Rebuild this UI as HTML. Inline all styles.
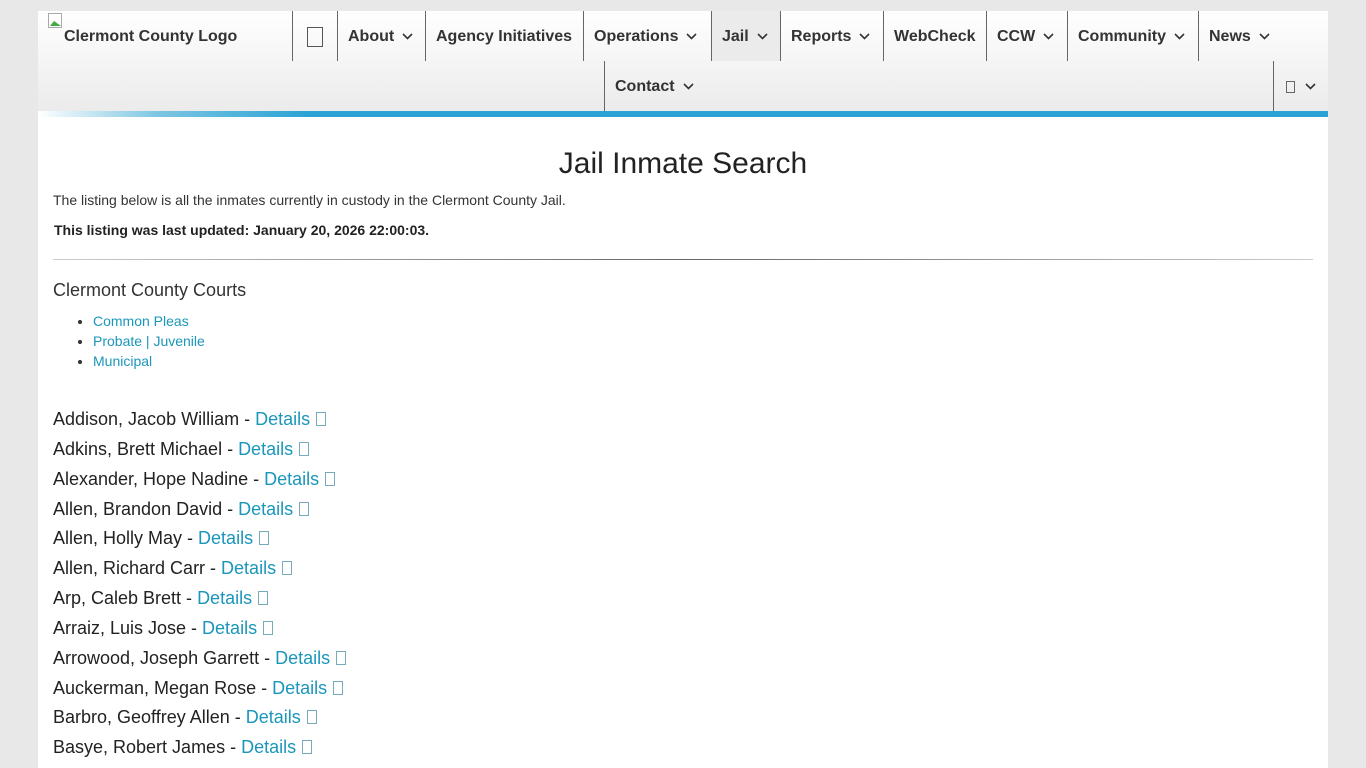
<!DOCTYPE html>
<html style="height:768px;overflow:hidden"><head><meta charset="utf-8"><style>
*{box-sizing:border-box;margin:0;padding:0}
body{background:#e8e8e8;font-family:"Liberation Sans",Arial,sans-serif;color:#333;width:1366px;height:768px;overflow:hidden;position:relative}
#wrap{position:absolute;left:38px;top:11px;width:1290px;height:757px;background:#fff;overflow:hidden}
#nav{position:absolute;left:0;top:0;width:1290px;height:100px;background:linear-gradient(#fff,#ebebeb);box-shadow:0 1px 3px rgba(0,0,0,.4)}
#bar{position:absolute;left:0;top:100px;width:1290px;height:6px;background:linear-gradient(90deg,#fff 0,#7cc6e2 120px,#29a3d5 270px,#29a3d5 100%)}
.it{position:absolute;height:50px;line-height:52px;font-weight:bold;font-size:16px;color:#333;padding-left:10px;border-left:1px solid #666;white-space:nowrap}
.it svg{margin-left:8px;vertical-align:middle}
.logo{position:absolute;left:10px;top:0;font-weight:bold;font-size:16px;color:#333}
.box{display:inline-block;width:16px;height:20px;border:1px solid #555;vertical-align:middle}
.sbox{display:inline-block;width:9px;height:12px;border:1px solid #666;vertical-align:middle}
.content{position:absolute;left:15px;top:0;width:1260px}
h1{position:absolute;top:136px;width:1260px;text-align:center;font-weight:normal;font-size:30px;color:#222}
a{color:#1b96bb;text-decoration:none}
.names div{height:29.85px;font-size:18px;line-height:29.85px;color:#222}
.lbox{display:inline-block;width:10px;height:14px;border:1px solid #7ab;vertical-align:-1px;margin-left:6px}
</style></head><body>
<div id="wrap">
<div id="nav">
 <div class="logo"><svg width="16" height="16" style="position:absolute;left:0;top:2px"><rect x="0.5" y="0.5" width="13" height="14" fill="#fff" stroke="#aaa"/><path d="M2 13 L6 8 L13 13Z" fill="#4a4"/></svg><span style="position:absolute;left:16px;top:17px;white-space:nowrap">Clermont County Logo</span></div>
 <div class="it" style="left:254px;top:0;width:45px;padding-left:14px"><span class="box"></span></div>
 <div class="it" style="left:299px;top:0">About<svg width="11" height="7"><path d="M1 1l4.5 4.5L10 1" stroke="#333" stroke-width="1.6" fill="none"/></svg></div>
 <div class="it" style="left:387px;top:0">Agency Initiatives</div>
 <div class="it" style="left:545px;top:0">Operations<svg width="11" height="7"><path d="M1 1l4.5 4.5L10 1" stroke="#333" stroke-width="1.6" fill="none"/></svg></div>
 <div class="it" style="left:673px;top:0;width:69px;background:#ebebeb">Jail<svg width="11" height="7"><path d="M1 1l4.5 4.5L10 1" stroke="#333" stroke-width="1.6" fill="none"/></svg></div>
 <div class="it" style="left:742px;top:0">Reports<svg width="11" height="7"><path d="M1 1l4.5 4.5L10 1" stroke="#333" stroke-width="1.6" fill="none"/></svg></div>
 <div class="it" style="left:845px;top:0">WebCheck</div>
 <div class="it" style="left:948px;top:0">CCW<svg width="11" height="7"><path d="M1 1l4.5 4.5L10 1" stroke="#333" stroke-width="1.6" fill="none"/></svg></div>
 <div class="it" style="left:1029px;top:0">Community<svg width="11" height="7"><path d="M1 1l4.5 4.5L10 1" stroke="#333" stroke-width="1.6" fill="none"/></svg></div>
 <div class="it" style="left:1160px;top:0">News<svg width="11" height="7"><path d="M1 1l4.5 4.5L10 1" stroke="#333" stroke-width="1.6" fill="none"/></svg></div>
 <div class="it" style="left:566px;top:50px">Contact<svg width="11" height="7"><path d="M1 1l4.5 4.5L10 1" stroke="#333" stroke-width="1.6" fill="none"/></svg></div>
 <div class="it" style="left:1235px;top:50px;padding-left:12px"><span class="sbox"></span><svg width="11" height="7" style="margin-left:10px"><path d="M1 1l4.5 4.5L10 1" stroke="#333" stroke-width="1.6" fill="none"/></svg></div>
</div>
<div id="bar"></div>
<div class="content">
<h1>Jail Inmate Search</h1>
<p style="position:absolute;top:181px;font-size:14px;color:#333">The listing below is all the inmates currently in custody in the Clermont County Jail.</p>
<p style="position:absolute;top:211px;left:1px;font-size:14px;font-weight:bold;color:#222">This listing was last updated: January 20, 2026 22:00:03.</p>
<div style="position:absolute;top:248px;width:1260px;height:1px;background:linear-gradient(90deg,#ccc,#666 50%,#ccc)"></div>
<div style="position:absolute;top:269px;font-size:18px;color:#333">Clermont County Courts</div>
<ul style="position:absolute;top:300px;left:25px;font-size:14px;line-height:20px;padding-left:15px">
<li><a>Common Pleas</a></li><li><a>Probate | Juvenile</a></li><li><a>Municipal</a></li></ul>
<div class="names" style="position:absolute;top:394px">
<div>Addison, Jacob William - <a>Details<span class="lbox"></span></a></div>
<div>Adkins, Brett Michael - <a>Details<span class="lbox"></span></a></div>
<div>Alexander, Hope Nadine - <a>Details<span class="lbox"></span></a></div>
<div>Allen, Brandon David - <a>Details<span class="lbox"></span></a></div>
<div>Allen, Holly May - <a>Details<span class="lbox"></span></a></div>
<div>Allen, Richard Carr - <a>Details<span class="lbox"></span></a></div>
<div>Arp, Caleb Brett - <a>Details<span class="lbox"></span></a></div>
<div>Arraiz, Luis Jose - <a>Details<span class="lbox"></span></a></div>
<div>Arrowood, Joseph Garrett - <a>Details<span class="lbox"></span></a></div>
<div>Auckerman, Megan Rose - <a>Details<span class="lbox"></span></a></div>
<div>Barbro, Geoffrey Allen - <a>Details<span class="lbox"></span></a></div>
<div>Basye, Robert James - <a>Details<span class="lbox"></span></a></div>
</div>
</div>
</div>
</body></html>
